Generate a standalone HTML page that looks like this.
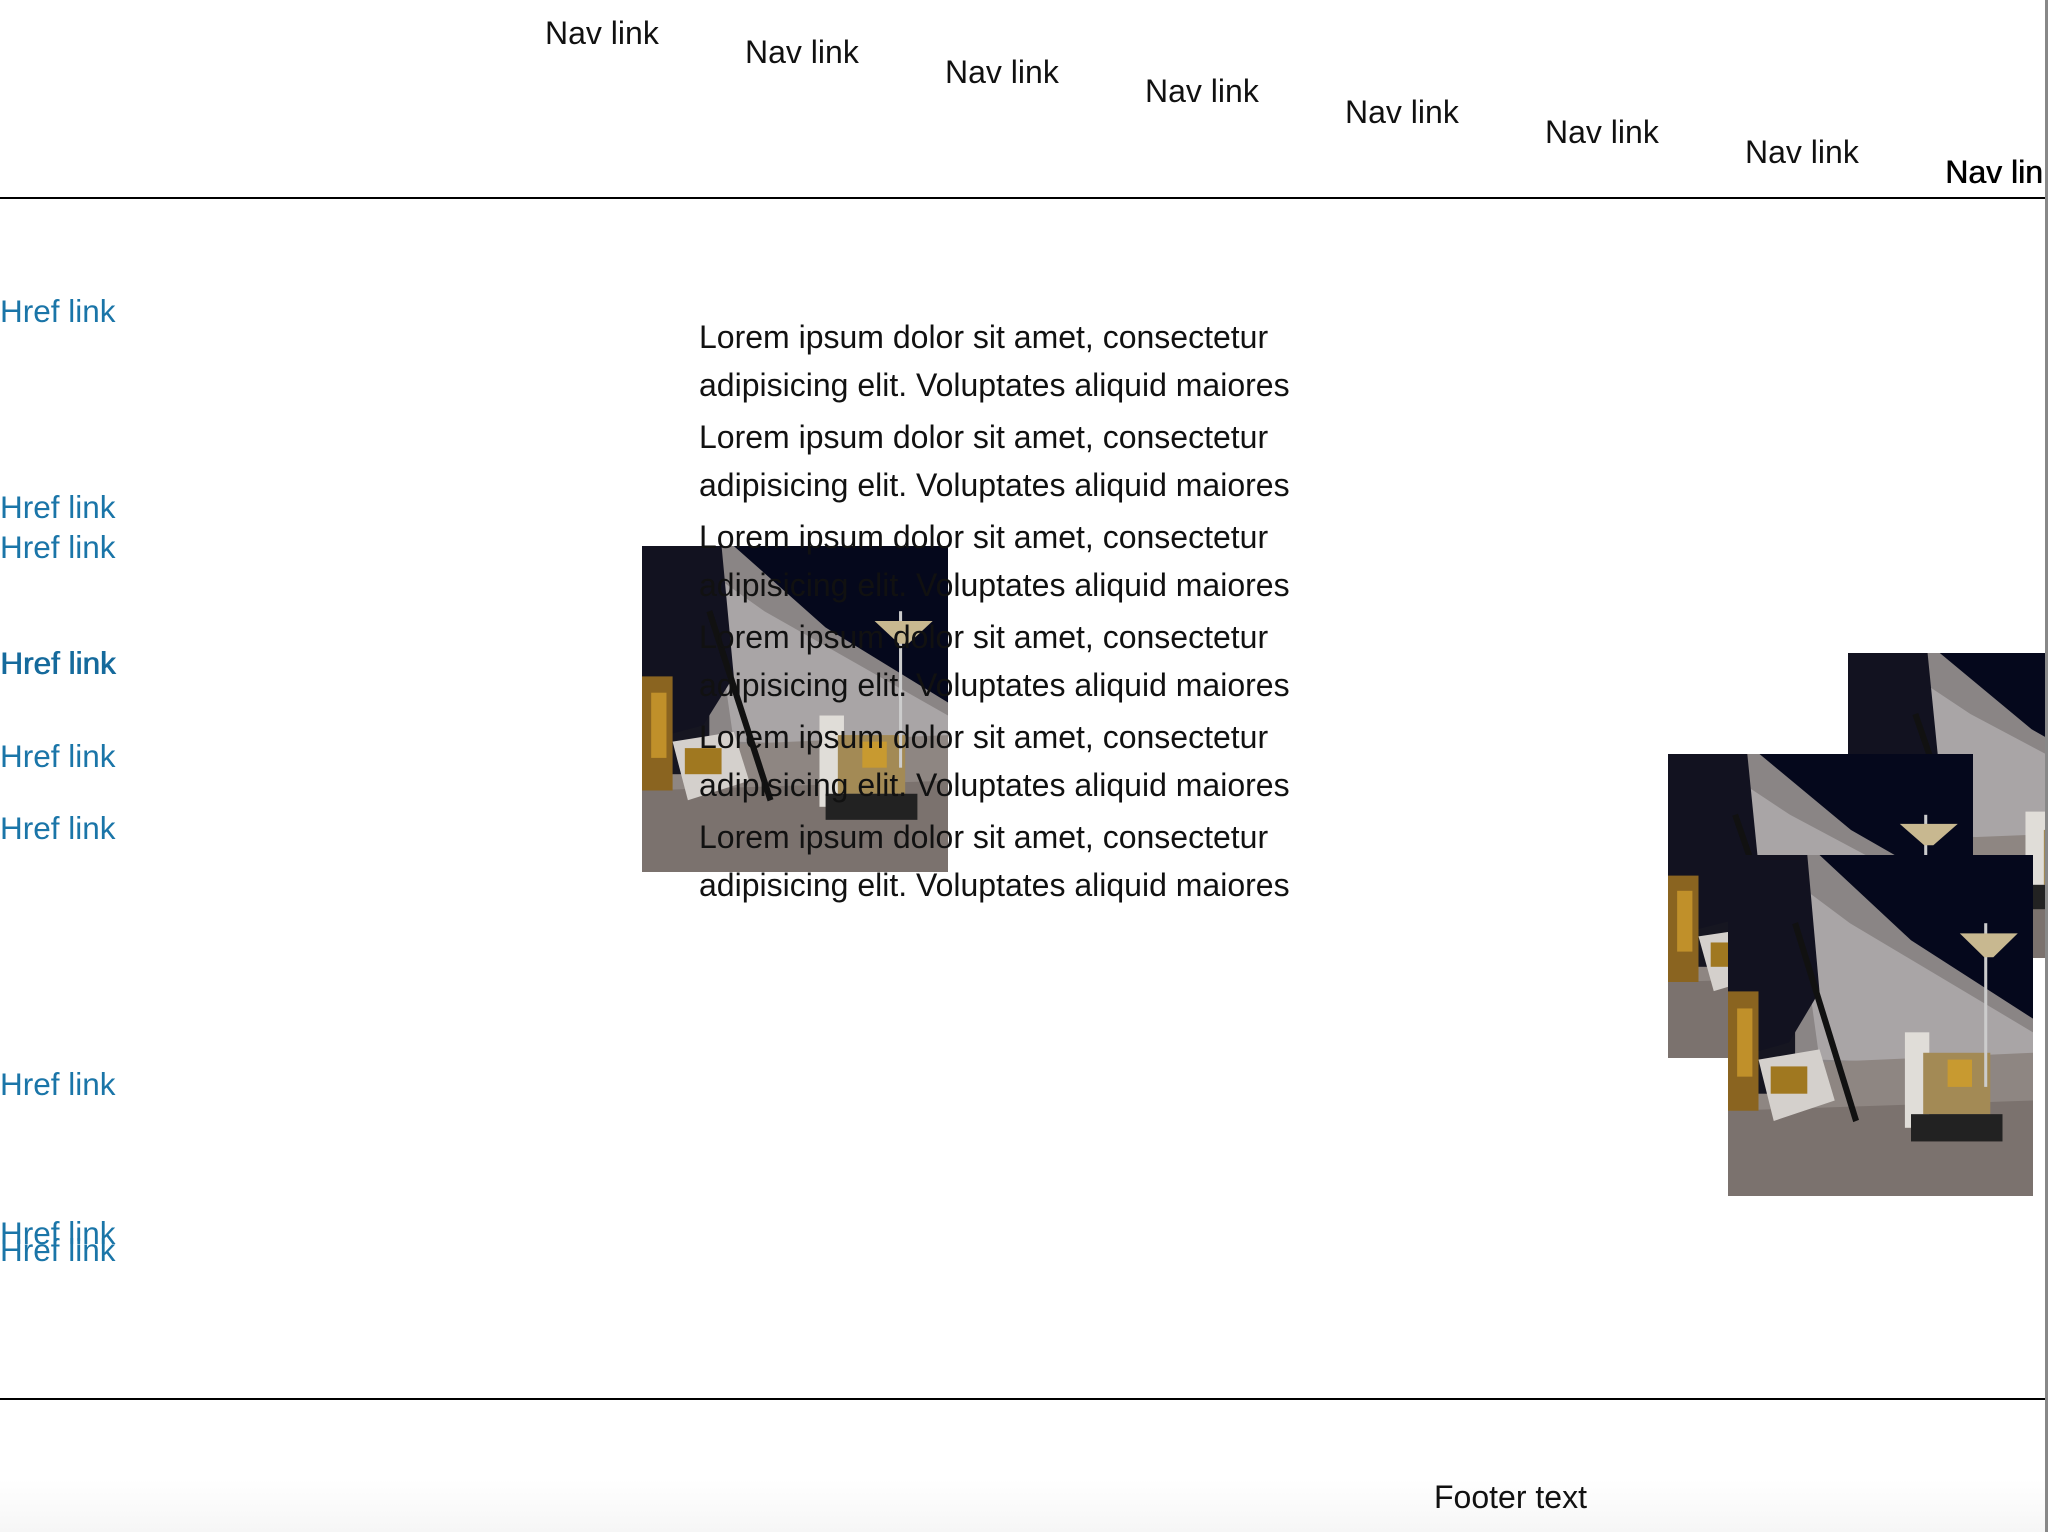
<!DOCTYPE html>
<html><head><meta charset="utf-8"><style>
html,body{margin:0;padding:0;width:2048px;height:1532px;overflow:hidden;background:#fff;font-family:"Liberation Sans",Arial,sans-serif;}
.a{position:absolute;white-space:nowrap;line-height:34px;font-size:32px;}
.nav{color:#111;}
.h{color:#1a75a8;left:0;font-size:31.5px;}
.p{position:absolute;left:699px;font-size:32px;line-height:48px;color:#111;white-space:nowrap;}
.img{position:absolute;width:306px;overflow:hidden;}
.img svg{display:block;width:100%;height:100%;}
</style></head><body>
<svg width="0" height="0" style="position:absolute"><defs>
<symbol id="moon" viewBox="0 0 100 100" preserveAspectRatio="none">
<rect width="100" height="100" fill="#05081c"/>
<polygon points="18,0 30,0 60,25 100,48 100,70 0,70 0,20" fill="#8a8585"/>
<polygon points="22,8 40,20 70,36 100,52 100,62 30,60" fill="#a9a5a6"/>
<polygon points="0,62 100,58 100,100 0,100" fill="#8e8682"/>
<polygon points="0,75 100,72 100,100 0,100" fill="#7b726e"/>
<rect x="0" y="0" width="22" height="70" fill="#161621"/>
<polygon points="0,0 26,0 30,40 20,55 0,60" fill="#121220"/>
<rect x="0" y="40" width="10" height="35" fill="#8a6420"/>
<rect x="3" y="45" width="5" height="20" fill="#c0902a"/>
<polygon points="10,60 30,57 35,72 15,78" fill="#d4d0cc"/>
<rect x="14" y="62" width="12" height="8" fill="#a07820"/>
<line x1="22" y1="20" x2="42" y2="78" stroke="#111" stroke-width="2"/>
<rect x="58" y="52" width="8" height="28" fill="#e0ddd8"/>
<rect x="64" y="58" width="22" height="18" fill="#a38a55"/>
<rect x="72" y="60" width="8" height="8" fill="#c89a30"/>
<rect x="84" y="20" width="1" height="48" fill="#ccc"/>
<polygon points="76,23 95,23 87,30 84,30" fill="#c8b890"/>
<rect x="60" y="76" width="30" height="8" fill="#222"/>
</symbol></defs></svg>

<div class="a nav" style="left:545px;top:16px">Nav link</div>
<div class="a nav" style="left:745px;top:35px">Nav link</div>
<div class="a nav" style="left:945px;top:55px">Nav link</div>
<div class="a nav" style="left:1145px;top:74px">Nav link</div>
<div class="a nav" style="left:1345px;top:95px">Nav link</div>
<div class="a nav" style="left:1545px;top:115px">Nav link</div>
<div class="a nav" style="left:1745px;top:135px">Nav link</div>
<div class="a nav" style="left:1945px;top:155px;width:100px;overflow:hidden;color:#000;text-shadow:0.6px 0 0 #000">Nav link</div>

<div style="position:absolute;left:0;top:197px;width:2045px;height:2px;background:#000"></div>
<div style="position:absolute;left:0;top:1398px;width:2045px;height:2px;background:#000"></div>
<div style="position:absolute;left:2045px;top:0;width:3px;height:1532px;background:#888"></div>
<div style="position:absolute;left:0;top:1400px;width:2045px;height:132px;background:linear-gradient(#fff 60%,#f6f6f6)"></div>

<div class="a h" style="top:294px">Href link</div>
<div class="a h" style="top:490px">Href link</div>
<div class="a h" style="top:530px">Href link</div>
<div class="a h" style="top:646px;color:#156a9c;text-shadow:0.8px 0 0 #156a9c">Href link</div>
<div class="a h" style="top:739px">Href link</div>
<div class="a h" style="top:811px">Href link</div>
<div class="a h" style="top:1067px">Href link</div>
<div class="a h" style="top:1216px">Href link</div>
<div class="a h" style="top:1233px">Href link</div>

<div class="img" style="left:642px;top:546px;height:326px"><svg><use href="#moon"/></svg></div>

<div class="p" style="top:313px">Lorem ipsum dolor sit amet, consectetur<br>adipisicing elit. Voluptates aliquid maiores</div>
<div class="p" style="top:413px">Lorem ipsum dolor sit amet, consectetur<br>adipisicing elit. Voluptates aliquid maiores</div>
<div class="p" style="top:513px">Lorem ipsum dolor sit amet, consectetur<br>adipisicing elit. Voluptates aliquid maiores</div>
<div class="p" style="top:613px">Lorem ipsum dolor sit amet, consectetur<br>adipisicing elit. Voluptates aliquid maiores</div>
<div class="p" style="top:713px">Lorem ipsum dolor sit amet, consectetur<br>adipisicing elit. Voluptates aliquid maiores</div>
<div class="p" style="top:813px">Lorem ipsum dolor sit amet, consectetur<br>adipisicing elit. Voluptates aliquid maiores</div>

<div class="img" style="left:1848px;top:653px;height:305px;width:197px"><svg style="width:306px"><use href="#moon"/></svg></div>
<div class="img" style="left:1668px;top:754px;height:304px;width:305px"><svg><use href="#moon"/></svg></div>
<div class="img" style="left:1728px;top:855px;height:341px;width:305px"><svg><use href="#moon"/></svg></div>

<div class="a" style="left:1434px;top:1480px;color:#111">Footer text</div>
</body></html>
